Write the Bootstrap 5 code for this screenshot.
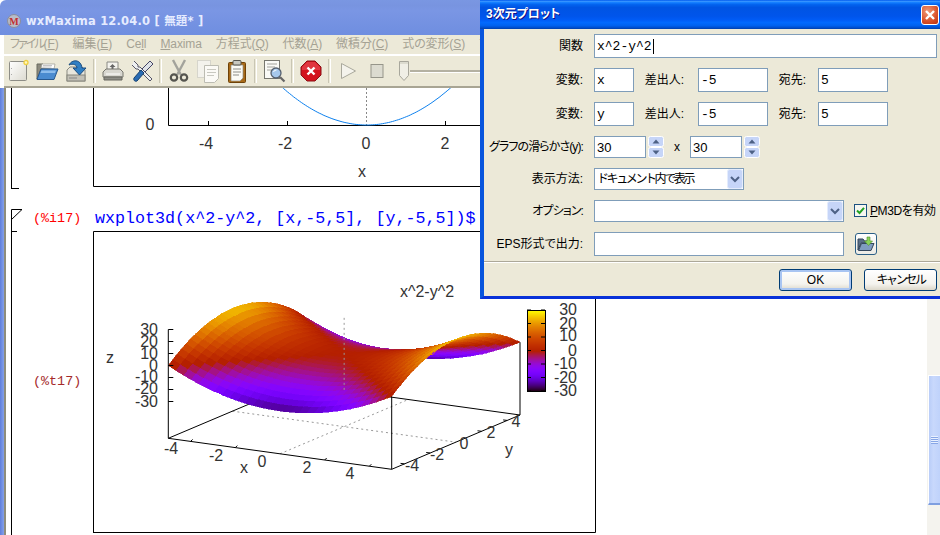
<!DOCTYPE html>
<html lang="ja">
<head>
  <meta charset="UTF-8" />
  <title>wxMaxima 12.04.0</title>
  <link rel="stylesheet" href="https://cdn.jsdelivr.net/npm/bootstrap@5.3.0/dist/css/bootstrap.min.css" />
  <style>
    html, body { height: 100%; margin: 0; overflow: hidden; background: #fff; }
    body { font: 12px/1.2 "Liberation Sans", "Noto Sans CJK JP", sans-serif; font-feature-settings: "palt"; color: #000; }
    .app-win { width: 940px; height: 535px; position: relative; overflow: hidden; }

    .main-title { height: 35px; flex: none; padding: 14px 0 0 7px; border-top-left-radius: 6px; background: linear-gradient(#7a97e2, #7894e0 16%, #7a96e4 30%, #6f8ee0); color: #e6ecff; font: bold 11.5px/14px "DejaVu Sans", "Noto Sans CJK JP", sans-serif; letter-spacing: .2px; }
    .main-title svg { margin-right: 5px; flex: none; }
    .menu-strip { height: 21px; flex: none; margin-left: 4px; padding: 2px 0 0 6px; gap: 14px; background: #ece9d8; border-bottom: 2px solid #fff; color: #a5a294; line-height: 15px; letter-spacing: -.1px; white-space: nowrap; }
    .menu-kana { letter-spacing: -2px; }
    .tool-strip { height: 32px; flex: none; margin-left: 4px; padding-left: 2px; gap: 5px; background: #ece9d8; border-bottom: 2px solid #a8a594; }
    .tool-strip svg { flex: none; }
    .tool-sep { width: 3px; height: 24px; flex: none; border-left: 1px solid #c9c6b4; border-right: 1px solid #fff; }
    .speed-track { width: 90px; height: 2px; flex: none; margin-left: -5px; background: #b4b1a2; border-bottom: 1px solid #fff; box-sizing: content-box; }

    .work-row { flex: 1 1 auto; min-height: 0; }
    .edge-left { width: 6px; flex: none; background: linear-gradient(90deg, #5f7edb, #84a0ea 66%, #8f8d7c 67%, #8f8d7c); }
    .sheet { flex: 1 1 auto; min-width: 0; background: #fff; }
    .scroll-col { width: 13px; flex: none; background: #f4f3ee; }
    .scroll-thumb { width: 12px; height: 130px; margin: 287px 0 0 1px; background: linear-gradient(90deg, #b9cdf8, #c8d8fc 40%, #bfd2fb); border: 1px solid #fff; border-bottom: 2px solid #7f9fe0; border-right: 0; padding-top: 60px; }
    .scroll-thumb i { display: block; width: 7px; height: 8px; margin-left: 2px; background: repeating-linear-gradient(#e8f0ff 0 1px, #88a6e6 1px 2px); }

    .cell-one { margin-left: 5px; }
    .cell-mark { width: 8px; height: 101px; flex: none; border-left: 1px solid #000; border-bottom: 1px solid #000; }
    .plot-first { margin-left: 74px; flex: none; display: block; }
    .cell-two { margin: 20px 0 0 5px; }
    .in-line { height: 22px; font: 16.7px/20px "Liberation Mono", monospace; white-space: nowrap; }
    .in-line svg { flex: none; }
    .in-tag { width: 62px; margin-left: 11px; color: #f00; flex: none; font-size: 13.4px; }
    .in-code { color: #00f; }
    .out-rail { width: 82px; height: 304px; flex: none; border-left: 1px solid #000; position: relative; }
    .out-tick { width: 5px; border-top: 1px solid #000; }
    .out-tag { margin: 140px 0 0 21px; color: #a52a2a; font: 13.4px/20px "Liberation Mono", monospace; }
    .plot-second { display: block; flex: none; }
    .plot-second text, .plot-first text { font: 16px "Liberation Sans", sans-serif; fill: #333; }

    .dlg { position: absolute; left: 480px; top: 0; width: 464px; height: 299px; background: #ece9d8; border: solid #0855dd; border-width: 0 4px 3px; border-bottom-color: #0831d9; }
    .dlg-title { height: 29px; flex: none; margin: 0 -4px; padding: 0 5px 0 6px; white-space: nowrap; background: linear-gradient(#0058ee, #3593ff 5%, #127dff 9%, #0262ee 16%, #0054e3 26%, #0055eb 56%, #005bf5 68%, #026afe 78%, #0062ef 88%, #0052d6 94%, #0040ab); color: #fff; font-weight: bold; text-shadow: 1px 1px #0f1089; }
    .dlg-close { width: 18px; height: 20px; flex: none; border: 1px solid #fff; border-radius: 3px; background: radial-gradient(circle at 35% 30%, #f09a78, #d9512a 60%, #b93010); }
    .dlg-form { padding-top: 5px; gap: 10px; }
    .dlg-row { height: 24px; }
    .dlg-row.short { height: 22px; }
    .lbl-main { width: 99px; margin-right: 11px; flex: none; text-align: right; white-space: nowrap; }
    .lbl-narrow { letter-spacing: -.9px; }
    .lbl-from { width: 50px; margin-right: 14px; flex: none; text-align: right; }
    .lbl-to { width: 38px; margin-right: 12px; flex: none; text-align: right; }
    .lbl-x { width: 26px; flex: none; text-align: center; }
    .xp-field.form-control { min-height: 0; height: 100%; padding: 0 2px; border: 1px solid #7f9db9; border-radius: 0; flex: none; font: 13px "Liberation Mono", monospace; color: #000; box-shadow: none; }
    .w-var { width: 40px !important; }
    .w-num { width: 70px !important; }
    .w-spin { width: 52px !important; font-family: "Liberation Sans", sans-serif !important; }
    .w-fn { width: 343px !important; }
    .w-wide { width: 250px !important; }
    .fn-wrap { position: relative; }
    .fn-caret { position: absolute; left: 59px; top: 5px; width: 1px; height: 15px; background: #000; }
    .spin-btn { margin-left: 2px; flex: none; }
    .combo { position: relative; height: 100%; flex: none; }
    .xp-combo.form-select { width: 100%; min-height: 0; height: 100%; padding: 0 2px; border: 1px solid #7f9db9; border-radius: 0; background: #fff; font-size: 12px; line-height: 20px; color: #000; box-shadow: none; }
    .combo-kana.form-select { letter-spacing: -2.4px; }
    .combo-btn { position: absolute; right: 1px; top: 1px; pointer-events: none; }
    .pm3d-check { margin-left: 10px; gap: 3px; white-space: nowrap; letter-spacing: -.4px; }
    .eps-btn { width: 22px; height: 22px; margin-left: 11px; padding: 0; flex: none; border: 1px solid #2b5f86; border-radius: 3px; background: linear-gradient(#fff, #ecebe5); }
    .dlg-rule { margin-top: 5px; border-top: 1px solid #aca899; border-bottom: 1px solid #fff; margin-right: 0; }
    .dlg-foot { padding: 6px 3px 0 0; gap: 12px; }
    .xp-btn.btn { width: 73px; height: 22px; padding: 0; border: 1px solid #003c74; border-radius: 3px; background: linear-gradient(#fff, #f4f3ee 70%, #dcd8ca); font-size: 12px; line-height: 20px; color: #000; }
    .xp-btn.xp-default { box-shadow: inset 0 0 0 2px #a9c5f2; }
    .xp-btn.xp-kana { letter-spacing: -2.4px; }
  </style>
</head>
<body>
  <div class="app-win d-flex flex-column">
    <div class="main-title d-flex align-items-start">
      <svg width="14" height="14" viewBox="0 0 14 14"><circle cx="7" cy="7" r="6.5" fill="#b9bcc8" stroke="#8a8d9c"/><text x="7" y="10.5" text-anchor="middle" font-family="Liberation Serif" font-size="10" fill="#c33030">M</text></svg>
      <span>wxMaxima 12.04.0 [ 無題* ]</span>
    </div>
    <div class="menu-strip d-flex">
      <span><span class="menu-kana">ファイル</span>(<u>F</u>)</span><span>編集(<u>E</u>)</span><span>Ce<u>l</u>l</span><span><u>M</u>axima</span><span>方程式(<u>Q</u>)</span><span>代数(<u>A</u>)</span><span>微積分(<u>C</u>)</span><span>式の変形(<u>S</u>)</span><span>プ</span>
    </div>
    <div class="tool-strip d-flex align-items-center">
      <!-- new -->
      <svg width="24" height="24" viewBox="0 0 24 24"><defs><linearGradient id="pg" x1="0" y1="0" x2="1" y2="1"><stop offset="0" stop-color="#fff"/><stop offset="1" stop-color="#dcdad0"/></linearGradient></defs><rect x="3.5" y="2.5" width="17" height="19" rx="1" fill="url(#pg)" stroke="#8d8d86"/><path d="M5.5 9v.8M5.5 15v.8" stroke="#999"/><circle cx="20" cy="3.5" r="2" fill="#fff8c0" stroke="#f0d040" stroke-width="1.3"/></svg>
      <!-- open -->
      <svg width="24" height="24" viewBox="0 0 24 24"><path d="M2 20V5h6l2 2h8v3H6z" fill="#8d8b7e" stroke="#6b6a5e"/><path d="M6 9l1-4h13l-1 5z" fill="#fff" stroke="#9a9a90" stroke-width=".7"/><path d="M8 6.5h9M7.500 8h9" stroke="#aaa" stroke-width=".7"/><path d="M2 20.500l4-10.500h17l-4 10.500z" fill="#4a8bd0" stroke="#27588f"/><path d="M6.500 11.500h14.500l-1 2.500H5.500z" fill="#8cbcec"/></svg>
      <!-- save -->
      <svg width="24" height="24" viewBox="0 0 24 24"><path d="M3 11l3-3h12l3 3v11H3z" fill="#e8e6dc" stroke="#8b8b82"/><rect x="3" y="16" width="18" height="6" fill="#c2c0b6" stroke="#85857c"/><path d="M5 19h8" stroke="#888"/><path d="M5 6c3-6 12-6 13 3h4l-6.500 7L9 9h4c0-3-4-5-8-3z" fill="#2f7fc4" stroke="#1b4d80"/></svg>
      <div class="tool-sep"></div>
      <!-- print -->
      <svg width="24" height="24" viewBox="0 0 24 24"><path d="M6 11V3h11v8z" fill="#f4f3ee" stroke="#8a8a84"/><path d="M11.500 5l-3 3h2v2h2V8h2z" fill="#666"/><path d="M2 13l3-3h14l3 3v5H2z" fill="#d8d7d0" stroke="#77776f"/><path d="M3 18h18v3H3z" fill="#8f8f88" stroke="#66665f"/><path d="M5 15h14" stroke="#fff"/></svg>
      <!-- tools -->
      <svg width="24" height="24" viewBox="0 0 24 24"><path d="M4 2l4 4v2h2l12 12-2 2L8 10H6L2 6" fill="#eef0f2" stroke="#556" stroke-width="1"/><path d="M20 2l3 3-8 8-3-3z" fill="#dfe3e8" stroke="#446"/><path d="M11 11l3 3-7 8c-2 1-4-1-3-3z" fill="#2a6cb4" stroke="#14406f"/></svg>
      <div class="tool-sep"></div>
      <!-- cut -->
      <svg width="24" height="24" viewBox="0 0 24 24"><path d="M6 1l8 15M18 1l-8 15" stroke="#a3a39c" stroke-width="2.400" fill="none"/><circle cx="7" cy="18.500" r="3.200" fill="none" stroke="#55554f" stroke-width="2.200"/><circle cx="17" cy="18.500" r="3.200" fill="none" stroke="#55554f" stroke-width="2.200"/></svg>
      <!-- copy -->
      <svg width="24" height="24" viewBox="0 0 24 24"><rect x="1.500" y="1.500" width="13" height="17" fill="#f3f2ec" stroke="#d6d5cc"/><path d="M8.500 6.500h14v13l-4 4h-10z" fill="#fbfaf6" stroke="#bcbcb2"/><path d="M11 10.500h9M11 13.500h9M11 16.500h7" stroke="#c8c8c0"/></svg>
      <!-- paste -->
      <svg width="24" height="24" viewBox="0 0 24 24"><rect x="3.500" y="3.500" width="17" height="20" rx="1" fill="#a86a18" stroke="#6e4208"/><path d="M6 6h12v13l-3 3H6z" fill="#fbfbf6" stroke="#8c8c84" stroke-width=".7"/><path d="M8 10h8M8 13h8M8 16h6" stroke="#8d8d88"/><rect x="8" y="1.500" width="8" height="4.500" rx="1" fill="#c8c8c0" stroke="#55554f"/></svg>
      <div class="tool-sep"></div>
      <!-- preview -->
      <svg width="24" height="24" viewBox="0 0 24 24"><rect x="2.500" y="1.500" width="15" height="18" fill="#fafaf6" stroke="#77776f"/><path d="M5 5h10M5 8h8M5 11h5" stroke="#a2a29c"/><circle cx="14" cy="14" r="5" fill="#a6c8ec" stroke="#55606f" stroke-width="1.300"/><path d="M11.500 13a3 3 0 0 1 3-2" stroke="#fff" fill="none"/><path d="M18 18l4.500 4.500" stroke="#666" stroke-width="2.200"/></svg>
      <div class="tool-sep"></div>
      <!-- stop calculation -->
      <svg width="24" height="24" viewBox="0 0 24 24"><path d="M8 2h8l6 6v8l-6 6H8l-6-6V8z" fill="#d3121c" stroke="#8a0f14"/><path d="M8 3h8l5 5v3H3V8z" fill="#ea5058" opacity=".6"/><path d="M8.500 8.500l7 7M15.500 8.500l-7 7" stroke="#fff" stroke-width="2.400"/></svg>
      <div class="tool-sep"></div>
      <svg width="24" height="24" viewBox="0 0 24 24"><path d="M5.500 4.500L19.500 12 5.500 19.500z" fill="#f4f3ec" stroke="#a9a89c"/></svg>
      <svg width="24" height="24" viewBox="0 0 24 24"><rect x="6" y="5.500" width="12" height="13" fill="#dcdbd0" stroke="#96958a"/></svg>
      <svg class="ms-1" width="12" height="22" viewBox="0 0 12 22"><path d="M1.500 1.500h9v14l-4.500 5-4.500-5z" fill="#f0efe6" stroke="#a8a79c"/><path d="M2 2h8v2H2z" fill="#dcdbcf"/></svg>
      <div class="speed-track"></div>
    </div>

    <div class="work-row d-flex">
      <div class="edge-left"></div>
      <div class="sheet">
        <div class="cell-one d-flex">
          <div class="cell-mark"></div>
          <svg class="plot-first" width="503" height="99" viewBox="93 88 503 99">
            <path d="M93.500 88V186.500H595.500V88" fill="none" stroke="#000"/>
            <path d="M168.500 88V125.500H480" fill="none" stroke="#000"/>
            <path d="M208.500 125V121M287.500 125V121M445.500 125V121" stroke="#000"/>
            <path d="M366.500 88V125" stroke="#888" stroke-dasharray="2 2"/>
            <path id="curve1" fill="none" stroke="#0c80ee"/>
            <text x="150" y="130" text-anchor="middle">0</text>
            <text x="206" y="149" text-anchor="middle">-4</text>
            <text x="285" y="149" text-anchor="middle">-2</text>
            <text x="366" y="149" text-anchor="middle">0</text>
            <text x="445" y="149" text-anchor="middle">2</text>
            <text x="362" y="177" text-anchor="middle">x</text>
          </svg>
        </div>
        <div class="cell-two">
          <div class="in-line d-flex">
            <svg width="11" height="22" viewBox="0 0 11 22"><path d="M.5 22V.5H11L.5 10.500" fill="none" stroke="#000"/></svg>
            <div class="in-tag">(%i17)</div>
            <div class="in-code">wxplot3d(x^2-y^2, [x,-5,5], [y,-5,5])$</div>
          </div>
          <div class="d-flex">
            <div class="out-rail">
              <div class="out-tick"></div>
              <div class="out-tag">(%t17)</div>
            </div>
            <svg class="plot-second" id="plot3d" width="503" height="303" viewBox="93 231 503 303"></svg>
          </div>
        </div>
      </div>
      <div class="scroll-col"><div class="scroll-thumb"><i></i></div></div>
    </div>

    <div class="dlg d-flex flex-column">
      <div class="dlg-title d-flex align-items-center justify-content-between">
        <span>3次元プロット</span>
        <span class="dlg-close d-flex align-items-center justify-content-center">
          <svg width="12" height="12" viewBox="0 0 12 12"><path d="M2 2l8 8M10 2l-8 8" stroke="#fff" stroke-width="2.400"/></svg>
        </span>
      </div>
      <div class="dlg-form d-flex flex-column">
        <div class="dlg-row d-flex align-items-center">
          <label class="lbl-main">関数</label>
          <div class="fn-wrap h-100">
            <input class="form-control xp-field w-fn" value="x^2-y^2" />
            <span class="fn-caret"></span>
          </div>
        </div>
        <div class="dlg-row d-flex align-items-center">
          <label class="lbl-main">変数:</label>
          <input class="form-control xp-field w-var" value="x" />
          <label class="lbl-from">差出人:</label>
          <input class="form-control xp-field w-num" value="-5" />
          <label class="lbl-to">宛先:</label>
          <input class="form-control xp-field w-num" value="5" />
        </div>
        <div class="dlg-row d-flex align-items-center">
          <label class="lbl-main">変数:</label>
          <input class="form-control xp-field w-var" value="y" />
          <label class="lbl-from">差出人:</label>
          <input class="form-control xp-field w-num" value="-5" />
          <label class="lbl-to">宛先:</label>
          <input class="form-control xp-field w-num" value="5" />
        </div>
        <div class="dlg-row short d-flex align-items-center">
          <label class="lbl-main lbl-narrow">グラフの滑らかさ(y):</label>
          <input class="form-control xp-field w-spin" value="30" />
          <svg class="spin-btn" width="16" height="22" viewBox="0 0 16 22"><rect x=".5" y=".5" width="15" height="10" rx="2" fill="#c6d5f8" stroke="#fff"/><rect x=".5" y="11.500" width="15" height="10" rx="2" fill="#c6d5f8" stroke="#fff"/><path d="M4.500 7.500L8 3.500l3.500 4z" fill="#4d6185"/><path d="M4.500 14.500L8 18.500l3.500-4z" fill="#4d6185"/></svg>
          <span class="lbl-x">x</span>
          <input class="form-control xp-field w-spin" value="30" />
          <svg class="spin-btn" width="16" height="22" viewBox="0 0 16 22"><rect x=".5" y=".5" width="15" height="10" rx="2" fill="#c6d5f8" stroke="#fff"/><rect x=".5" y="11.500" width="15" height="10" rx="2" fill="#c6d5f8" stroke="#fff"/><path d="M4.500 7.500L8 3.500l3.500 4z" fill="#4d6185"/><path d="M4.500 14.500L8 18.500l3.500-4z" fill="#4d6185"/></svg>
        </div>
        <div class="dlg-row short d-flex align-items-center">
          <label class="lbl-main">表示方法:</label>
          <div class="combo" style="width:150px">
            <select class="form-select xp-combo combo-kana"><option>ドキュメント内で表示</option></select>
            <svg class="combo-btn" width="16" height="20" viewBox="0 0 16 20"><rect x=".5" y=".5" width="15" height="19" rx="2" fill="#c6d5f8" stroke="#e4ecfd"/><path d="M4 8l4 4 4-4" fill="none" stroke="#4d6185" stroke-width="2"/></svg>
          </div>
        </div>
        <div class="dlg-row short d-flex align-items-center">
          <label class="lbl-main lbl-narrow">オプション:</label>
          <div class="combo" style="width:250px">
            <select class="form-select xp-combo"><option></option></select>
            <svg class="combo-btn" width="16" height="20" viewBox="0 0 16 20"><rect x=".5" y=".5" width="15" height="19" rx="2" fill="#c6d5f8" stroke="#e4ecfd"/><path d="M4 8l4 4 4-4" fill="none" stroke="#4d6185" stroke-width="2"/></svg>
          </div>
          <label class="pm3d-check d-flex align-items-center">
            <svg width="13" height="13" viewBox="0 0 13 13"><rect x=".5" y=".5" width="12" height="12" fill="#f6f6f0" stroke="#1c5180"/><path d="M3 6.500l2.500 2.500L10 3.800" fill="none" stroke="#21a121" stroke-width="2"/></svg>
            <span><u>P</u>M3Dを有効</span>
          </label>
        </div>
        <div class="dlg-row d-flex align-items-center">
          <label class="lbl-main">EPS形式で出力:</label>
          <input class="form-control xp-field w-wide" />
          <button type="button" class="eps-btn d-flex align-items-center justify-content-center">
            <svg width="18" height="16" viewBox="0 0 18 16"><path d="M1 14V3h5l1.500 2H13v2H4z" fill="#5a6f86" stroke="#34475c"/><path d="M1.500 14.500L4.500 7.500H17l-3 7z" fill="#7f9cc0" stroke="#34475c"/><path d="M10 1v4H7.500l4 4.500 4-4.500H13V1z" fill="#8ad25a" stroke="#4e8f2c" stroke-width=".6"/></svg>
          </button>
        </div>
      </div>
      <div class="dlg-rule"></div>
      <div class="dlg-foot d-flex justify-content-end">
        <button type="button" class="btn xp-btn xp-default">OK</button>
        <button type="button" class="btn xp-btn xp-kana">キャンセル</button>
      </div>
    </div>
  </div>

  <script src="https://cdn.jsdelivr.net/npm/bootstrap@5.3.0/dist/js/bootstrap.bundle.min.js"></script>
  <script>
    // first plot: y = x^2, only the top of the parabola shows above the frame bottom
    let d = "";
    for (let t = -2.3; t <= 2.3; t += 0.05) {
      const px = 366.7 + 39.6 * t, py = 125 - 8.28 * t * t;
      d += (d ? "L" : "M") + px.toFixed(1) + " " + py.toFixed(1);
    }
    document.getElementById("curve1").setAttribute("d", d);

    // second plot: same projection gnuplot used for the view, fitted from the box corners
    function proj(x, y, z) {
      return [168.3 + 22.34 * (x + 5) + 12.83 * (y + 5),
              438.3 + 3.1 * (x + 5) - 5.43 * (y + 5) - 72.8 - 1.2 * z];
    }
    // default pm3d palette (rgbformulae 7,5,15)
    function palette(g) {
      g = Math.max(0, Math.min(1, g));
      const r = Math.sqrt(g), gr = g * g * g, b = Math.max(0, Math.sin(2 * Math.PI * g));
      return `rgb(${Math.round(r * 255)},${Math.round(gr * 255)},${Math.round(b * 255)})`;
    }
    const f = (x, y) => x * x - y * y;
    const pt = p => p[0].toFixed(1) + "," + p[1].toFixed(1);
    let svg = '<path d="M93.5 533V231.5H595" fill="none" stroke="#000"/><path d="M595.5 231V532.500H93" fill="none" stroke="#000"/>';

    const line = (a, b, extra) => `<line x1="${a[0]}" y1="${a[1]}" x2="${b[0]}" y2="${b[1]}" stroke="#000" ${extra || ""}/>`;
    const dash = 'style="stroke:#999;stroke-dasharray:2 3"';
    const zb = -60.67;
    // floor
    svg += line(proj(0, -5, zb), proj(0, 5, zb), dash) + line(proj(-5, 0, zb), proj(5, 0, zb), dash);
    svg += line(proj(-5, -5, zb), proj(-5, 5, zb)) + line(proj(-5, 5, zb), proj(5, 5, zb));
    svg += line(proj(-5, -5, zb), proj(5, -5, zb)) + line(proj(5, -5, zb), proj(5, 5, zb));

    // surface, far cells first
    const n = 30, step = 10 / (n - 1), cells = [];
    for (let i = 0; i < n - 1; i++) {
      for (let j = 0; j < n - 1; j++) {
        const x0 = -5 + i * step, x1 = x0 + step, y0 = -5 + j * step, y1 = y0 + step;
        const zm = (f(x0, y0) + f(x1, y0) + f(x1, y1) + f(x0, y1)) / 4;
        cells.push({ depth: x0 - y0, zm, pts: [proj(x0, y0, f(x0, y0)), proj(x1, y0, f(x1, y0)), proj(x1, y1, f(x1, y1)), proj(x0, y1, f(x0, y1))] });
      }
    }
    cells.sort((a, b) => a.depth - b.depth);
    svg += '<g shape-rendering="crispEdges">';
    cells.forEach(c => {
      const col = palette((c.zm + 30) / 60);
      svg += `<polygon points="${c.pts.map(pt).join(" ")}" fill="${col}" stroke="${col}" stroke-width=".6"/>`;
    });
    svg += "</g>";

    // centre dashed line and box verticals
    svg += line(proj(0, 0, 30), proj(0, 0, -30), dash);
    svg += line(proj(5, -5, 0), proj(5, -5, zb)) + line(proj(5, 5, 0), proj(5, 5, zb));
    svg += line(proj(-5, -5, 30), proj(-5, -5, zb));
    [-30, -20, -10, 0, 10, 20, 30].forEach(z => {
      const p = proj(-5, -5, z);
      svg += line(p, [p[0] + 5, p[1]]);
    });
    [-4, -2, 2, 4].forEach(v => {
      const a = proj(v, -5, zb), b = proj(5, v, zb);
      svg += line(a, [a[0] + 2, a[1] - 2]) + line(b, [b[0] - 4, b[1] - .5]);
    });

    // colour box
    for (let y = 310; y < 392; y++) {
      svg += `<rect x="527" y="${y}" width="19" height="1" fill="${palette((391.5 - y) / 81.5)}"/>`;
    }
    svg += '<rect x="527.5" y="310.5" width="18" height="81" fill="none" stroke="#000"/>';
    [310, 323.500, 337, 350.500, 364, 377.500, 391].forEach(y => {
      svg += line([527, y], [531, y]) + line([541, y], [545, y]);
    });

    const labels = [
      ["x^2-y^2", 427, 297, "middle"], ["z", 110, 363, "middle"], ["x", 244, 473, "middle"], ["y", 509, 455, "middle"],
      ["30", 158, 335, "end"], ["20", 158, 347, "end"], ["10", 158, 359, "end"], ["0", 158, 371, "end"],
      ["-10", 158, 382, "end"], ["-20", 158, 394, "end"], ["-30", 158, 407, "end"],
      ["-4", 171, 454, "middle"], ["-2", 216, 461, "middle"], ["0", 262, 467, "middle"], ["2", 307, 473, "middle"], ["4", 350, 479, "middle"],
      ["-4", 412, 471, "middle"], ["-2", 437, 460, "middle"], ["0", 464, 449, "middle"], ["2", 491, 438, "middle"], ["4", 516, 427, "middle"],
      ["30", 577, 315, "end"], ["20", 577, 329, "end"], ["10", 577, 341, "end"], ["0", 577, 356, "end"],
      ["-10", 577, 369, "end"], ["-20", 577, 383, "end"], ["-30", 577, 396, "end"]
    ];
    labels.forEach(l => { svg += `<text x="${l[1]}" y="${l[2]}" text-anchor="${l[3]}">${l[0]}</text>`; });
    document.getElementById("plot3d").innerHTML = svg;
  </script>
</body>
</html>
